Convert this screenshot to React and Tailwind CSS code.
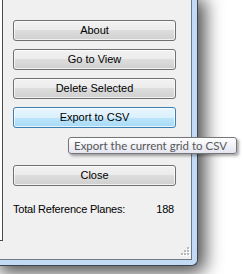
import React from 'react';

const buttons = ['About', 'Go to View', 'Delete Selected', 'Export to CSV'];

function WinButton({ label, hot }) {
  return (
    <div
      className={`h-[21px] w-[163px] rounded-[3px] border flex items-center justify-center text-[11px] text-black shadow-[inset_0_0_0_1px_rgba(255,255,255,0.7)] ${
        hot
          ? 'border-[#3c7fb1] bg-[linear-gradient(#eaf6fd_0%,#d9f0fc_50%,#bee6fd_50%,#a7d9f5_100%)]'
          : 'border-[#707070] bg-[linear-gradient(#f2f2f2_0%,#ebebeb_50%,#dddddd_50%,#cfcfcf_100%)]'
      }`}
    >
      {label}
    </div>
  );
}

export default function App() {
  return (
    <div className="w-[243px] h-[274px] bg-white relative overflow-hidden font-['Liberation_Sans',Arial,sans-serif]">
      {/* window frame */}
      <div className="w-[198px] h-[266px] flex bg-[#c3daf4] border-r border-b border-[#3d4550] rounded-br-[6px] pr-[5px] pb-[5px] shadow-[3px_3px_18px_4px_rgba(0,0,0,0.7)]">
        <div className="flex-1 flex bg-[#f0f0f0] border-r border-b border-[#6c7a8a] relative">
          {/* grid edge */}
          <div className="w-[3px] h-[241px] bg-white border-r border-b border-[#4a4a4a]" />

          <div className="ml-[10px] pt-[20px] flex flex-col">
            <div className="flex flex-col gap-[8px]">
              {buttons.map((b) => (
                <WinButton key={b} label={b} hot={b === 'Export to CSV'} />
              ))}
            </div>
            <div className="mt-[37px]">
              <WinButton label="Close" />
            </div>
            <div className="mt-[17px] flex justify-between w-[161px] text-[11px] tracking-[-0.2px] text-black leading-[13px]">
              <span>Total Reference Planes:</span>
              <span>188</span>
            </div>
          </div>

          {/* size grip */}
          <svg className="absolute right-[1px] bottom-[1px]" width="11" height="11" viewBox="0 0 11 11">
            {[[8, 0], [8, 3], [5, 3], [8, 6], [5, 6], [2, 6]].map(([x, y]) => (
              <g key={`${x}-${y}`}>
                <rect x={x + 1} y={y + 1} width="2" height="2" fill="#ffffff" />
                <rect x={x} y={y} width="2" height="2" fill="#b8b8b8" />
              </g>
            ))}
          </svg>
        </div>
      </div>

      {/* tooltip */}
      <div className="absolute left-[68px] top-[137px] w-[169px] h-[17px] rounded-[3px] border border-[#767676] bg-[linear-gradient(#ffffff,#e4e5f0)] shadow-[2px_2px_3px_rgba(0,0,0,0.35)] flex items-center pl-[5px] text-[11.5px] text-[#575757] font-['Lato',sans-serif] leading-none whitespace-nowrap">
        Export the current grid to CSV
      </div>
    </div>
  );
}
